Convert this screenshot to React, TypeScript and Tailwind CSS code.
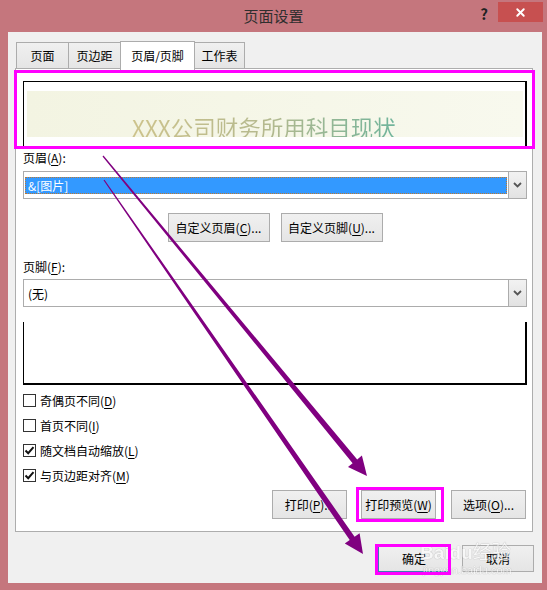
import { X } from "lucide-react";

type Pt = [number, number];

// tapered purple arrow: shaft grows from w1 to w2, then a triangular head
function arrowPolygon(s: Pt, t: Pt, w1: number, w2: number, headLen: number, headHalf: number) {
    const dx = t[0] - s[0];
    const dy = t[1] - s[1];
    const len = Math.hypot(dx, dy);
    const ux = dx / len;
    const uy = dy / len;
    const nx = -uy;
    const ny = ux;
    const bx = t[0] - ux * headLen;
    const by = t[1] - uy * headLen;
    const pts: Pt[] = [
        [s[0] + (nx * w1) / 2, s[1] + (ny * w1) / 2],
        [bx + (nx * w2) / 2, by + (ny * w2) / 2],
        [bx + nx * headHalf, by + ny * headHalf],
        t,
        [bx - nx * headHalf, by - ny * headHalf],
        [bx - (nx * w2) / 2, by - (ny * w2) / 2],
        [s[0] - (nx * w1) / 2, s[1] - (ny * w1) / 2],
    ];
    return pts.map((p) => `${p[0].toFixed(1)},${p[1].toFixed(1)}`).join(" ");
}

const tabs = [
    { label: "页面", width: "w-[53px]", active: false },
    { label: "页边距", width: "w-[53px]", active: false },
    { label: "页眉/页脚", width: "w-[75px]", active: true },
    { label: "工作表", width: "w-[51px]", active: false },
];

const btn =
    "h-[29px] border border-[#acacac] bg-linear-to-b from-[#f0f0f0] to-[#e5e5e5] text-[12px] leading-none text-black flex items-center justify-center";

const Dropdown = ({ children, selected }: { children: React.ReactNode; selected?: boolean }) => (
    <div className="h-[28px] border border-[#acacac] bg-white flex">
        <div className="flex-1 flex items-center pl-[1px] pr-[1px]">
            {selected ? (
                <div className="w-full h-[17px] bg-[#3399ff] border border-dotted border-[#c0782c] text-white text-[12px] leading-[15px] pl-[2px]">
                    {children}
                </div>
            ) : (
                <div className="text-[12px] leading-[17px] pl-[3px] text-black">{children}</div>
            )}
        </div>
        <div className="w-[18px] border-l border-[#acacac] bg-linear-to-b from-[#f2f2f2] to-[#e2e2e2] flex items-center justify-center">
            <svg width="9" height="6" viewBox="0 0 9 6">
                <path d="M1 1 L4.5 4.5 L8 1" stroke="#555" strokeWidth="1.8" fill="none" />
            </svg>
        </div>
    </div>
);

const CheckRow = ({ checked, children }: { checked: boolean; children: React.ReactNode }) => (
    <div className="h-[25px] flex items-center">
        <div className="w-[13px] h-[13px] border border-[#333] bg-white flex items-center justify-center">
            {checked && (
                <svg width="11" height="11" viewBox="0 0 11 11">
                    <path d="M1.5 5.5 L4.2 8.2 L9.5 2.2" stroke="#111" strokeWidth="2" fill="none" />
                </svg>
            )}
        </div>
        <span className="ml-[4px] text-[12px] leading-[16px] text-black">{children}</span>
    </div>
);

const U = ({ children }: { children: React.ReactNode }) => <span className="underline underline-offset-2">{children}</span>;

export default function App() {
    return (
        <div className="relative w-[547px] h-[590px] bg-[#c5767d] overflow-hidden font-['Noto_Sans_CJK_SC','Noto_Sans',sans-serif]">
            {/* title bar */}
            <div className="h-[32px] grid grid-cols-[1fr_auto_1fr]">
                <div />
                <div className="flex items-center text-[15px] text-[#2e2e2e]">页面设置</div>
                <div className="flex justify-end items-start">
                    <span className="mt-[5px] mr-[10px] text-[15px] font-bold text-[#222] leading-[18px]">?</span>
                    <div className="mt-[2px] mr-[4px] w-[45px] h-[20px] bg-[#c75050] flex items-center justify-center">
                        <X size={13} strokeWidth={3.5} color="#ffffff" />
                    </div>
                </div>
            </div>

            {/* client area */}
            <div className="ml-[8px] mr-[5px] h-[551px] bg-[#f0f0f0] flex flex-col">
                <div className="mt-[9px] ml-[8px] h-[29px] flex items-end -mb-[2px]">
                    {tabs.map((t, i) => (
                        <div
                            key={t.label}
                            className={`${t.width} ${i > 0 ? "-ml-px" : ""} border border-[#acacac] flex items-center justify-center text-[12px] leading-none text-black ${
                                t.active
                                    ? "relative z-10 h-[29px] bg-white border-b-0"
                                    : "h-[27px] mb-[1px] bg-linear-to-b from-[#f0f0f0] to-[#e5e5e5]"
                            }`}
                        >
                            {t.label}
                        </div>
                    ))}
                </div>

                {/* panel */}
                <div className="ml-[7px] w-[518px] h-[464px] border border-[#adadad] bg-white pl-[7px] pr-[5px] flex flex-col">
                    <div className="mt-[12px] h-[66px] border-t border-l border-r-2 border-black pl-[3px] pr-[2px] pt-[9px]">
                        <div className="h-[46px] overflow-hidden bg-linear-to-r from-[#f3f4e2] to-[#f8f9ee] pl-[105px] pt-[25px]">
                            <span className="text-[22.5px] leading-[23px] bg-linear-to-r from-[#cdc38c] via-[#b5b98e] to-[#6fb49b] bg-clip-text text-transparent">
                                XXX公司财务所用科目现状
                            </span>
                        </div>
                    </div>

                    <div className="mt-[3px] h-[16px] text-[12px] leading-[16px] text-black">
                        页眉(<U>A</U>):
                    </div>
                    <div className="mt-[5px]">
                        <Dropdown selected>&amp;[图片]</Dropdown>
                    </div>

                    <div className="mt-[14px] flex justify-center gap-[11px]">
                        <div className={`${btn} w-[102px]`}>
                            自定义页眉(<U>C</U>)...
                        </div>
                        <div className={`${btn} w-[102px]`}>
                            自定义页脚(<U>U</U>)...
                        </div>
                    </div>

                    <div className="mt-[17px] h-[16px] text-[12px] leading-[16px] text-black">
                        页脚(<U>F</U>):
                    </div>
                    <div className="mt-[4px]">
                        <Dropdown>(无)</Dropdown>
                    </div>

                    <div className="mt-[15px] h-[63px] border-l border-r-2 border-b-2 border-black" />

                    <div className="mt-[3px] flex flex-col">
                        <CheckRow checked={false}>
                            奇偶页不同(<U>D</U>)
                        </CheckRow>
                        <CheckRow checked={false}>
                            首页不同(<U>I</U>)
                        </CheckRow>
                        <CheckRow checked>
                            随文档自动缩放(<U>L</U>)
                        </CheckRow>
                        <CheckRow checked>
                            与页边距对齐(<U>M</U>)
                        </CheckRow>
                    </div>

                    <div className="mt-[2px] pr-[1px] flex justify-end">
                        <div className={`${btn} w-[75px]`}>
                            打印(<U>P</U>)...
                        </div>
                        <div className={`${btn} w-[75px] ml-[14px]`}>
                            打印预览(<U>W</U>)
                        </div>
                        <div className={`${btn} w-[75px] ml-[15px]`}>
                            选项(<U>O</U>)...
                        </div>
                    </div>
                </div>

                <div className="mt-[13px] mr-[8px] flex justify-end gap-[12px]">
                    <div className={`${btn} !h-[27px] w-[72px] !border-[#3c7fb1]`}>确定</div>
                    <div className={`${btn} !h-[27px] w-[72px]`}>取消</div>
                </div>
            </div>

            {/* baidu watermark */}
            <div className="absolute left-[420px] top-[540px] flex flex-col items-start opacity-60 pointer-events-none">
                <span className="text-[19px] leading-[22px] font-bold text-white [text-shadow:0_0_1px_#9a9a9a,0_0_1px_#9a9a9a] font-['Liberation_Sans',sans-serif]">
                    Baidu<span className="font-['Noto_Sans_CJK_SC',sans-serif] font-normal">经验</span>
                </span>
                <span className="ml-[3px] text-[11px] leading-[13px] text-white [text-shadow:0_0_1px_#9a9a9a,0_0_1px_#9a9a9a] font-['Liberation_Sans',sans-serif]">
                    jingyan.baidu.com
                </span>
            </div>

            {/* magenta annotation boxes */}
            <div className="absolute left-[14px] top-[70px] w-[521px] h-[79px] border-[3px] border-[#ff00ff] pointer-events-none" />
            <div className="absolute left-[356px] top-[487px] w-[88px] h-[35px] border-[3px] border-[#ff00ff] pointer-events-none" />
            <div className="absolute left-[375px] top-[544px] w-[76px] h-[31px] border-[3px] border-[#ff00ff] pointer-events-none" />

            {/* purple arrows */}
            <svg className="absolute inset-0 pointer-events-none" width="547" height="590" viewBox="0 0 547 590">
                <polygon points={arrowPolygon([103, 156], [367, 476], 1.2, 6, 19, 9)} fill="#800080" />
                <polygon points={arrowPolygon([104, 180], [363, 554], 1.2, 6, 19, 9)} fill="#800080" />
            </svg>
        </div>
    );
}
